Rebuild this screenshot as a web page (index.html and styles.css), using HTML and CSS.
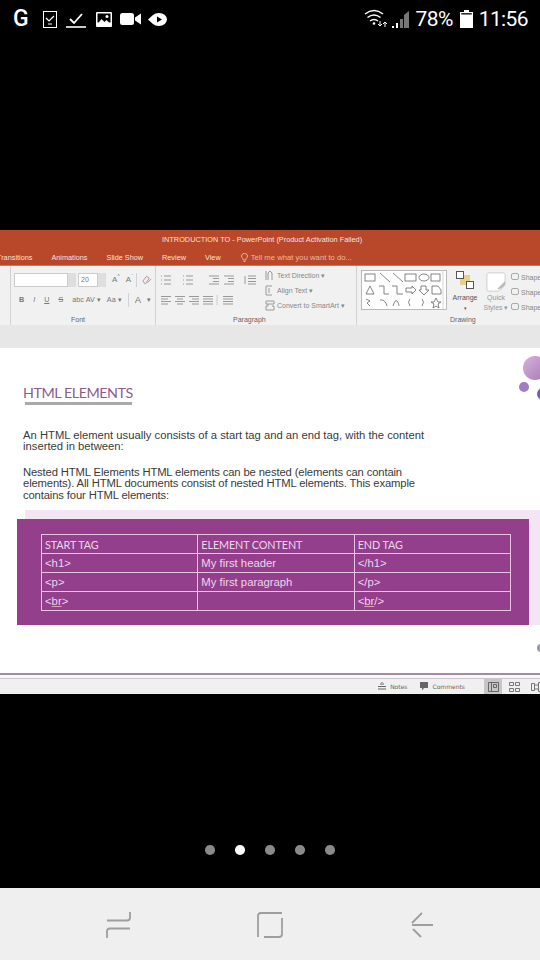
FILE: index.html
```html
<!DOCTYPE html>
<html lang="en">

<head>
    <meta charset="UTF-8">
    <meta name="viewport" content="width=device-width, initial-scale=1.0">
    <title>HTML Elements slide</title>
    <link rel="stylesheet" href="styles.css">
</head>

<body>

    <div class="phone-status">
        <div class="status-left">
            <span class="g-mark">G</span>
            <svg class="ic-check-box" width="14" height="17" viewBox="0 0 14 17"><rect x="0.5" y="0.5" width="13" height="16" fill="none" stroke="#fff"/><path d="M3 7l3 3 5-5M5 13h4" fill="none" stroke="#fff" stroke-width="1.2"/></svg>
            <svg class="ic-check" width="20" height="17" viewBox="0 0 20 17"><path d="M4 8l4 4 8-9" fill="none" stroke="#fff" stroke-width="1.8"/><path d="M0 16h20" stroke="#fff" stroke-width="1.6"/></svg>
            <svg class="ic-pic" width="16" height="15" viewBox="0 0 16 15"><rect width="16" height="15" rx="1" fill="#fff"/><rect x="1.5" y="1.5" width="13" height="9" fill="#000"/><path d="M1.5 12l4-5 3 3 2-2 4 4v1h-13z" fill="#fff"/><circle cx="11" cy="4.5" r="1.5" fill="#fff"/></svg>
            <svg class="ic-video" width="21" height="12" viewBox="0 0 21 12"><rect width="14" height="12" rx="2.5" fill="#fff"/><path d="M15 4.500l6-4v11l-6-4z" fill="#fff"/></svg>
            <svg class="ic-tag" width="19" height="13" viewBox="0 0 19 13"><path d="M0 6.500L5 2q2-2 6-2 7 0 8 6.500-1 6.500-8 6.500-4 0-6-2z" fill="#fff"/><path d="M9 3.500l5 3-5 3z" fill="#000"/></svg>
        </div>
        <div class="status-right">
            <svg class="ic-signal" width="46" height="22" viewBox="0 0 46 22">
                <path d="M1 6q9-7 18 0M3.500 9.500q6.500-5 13 0M6 13q4-3 8 0" fill="none" stroke="#fff" stroke-width="1.500"/>
                <circle cx="10" cy="15.500" r="1.300" fill="#fff"/>
                <path d="M16 13v5M14 16l2 2 2-2M21 19v-5M19 16l2-2 2 2" fill="none" stroke="#fff" stroke-width="1"/>
                <path d="M28 20h2v-2h-2zM32 20h2v-5h-2z" fill="#fff"/>
                <path d="M36 20h3v-9h-3zM40 20h5V3l-5 4z" fill="#777"/>
            </svg>
            <span class="status-pct">78%</span>
            <svg width="13" height="18" viewBox="0 0 13 18"><path d="M4 0h5v2h3.500q.5 0 .5.500V17.500q0 .5-.5.500H.500q-.5 0-.5-.5V2.500Q0 2 .5 2H4z" fill="#fff"/><rect x="1.200" y="3.200" width="10.600" height="1.300" fill="#000"/></svg>
            <span class="status-time">11:56</span>
        </div>
    </div>

    <div class="screen">
        <div class="title-bar">
            <div class="doc-title">INTRODUCTION TO - PowerPoint (Product Activation Failed)</div>
            <div class="tabs">
                <span class="tab first-tab">Transitions</span>
                <span class="tab">Animations</span>
                <span class="tab">Slide Show</span>
                <span class="tab">Review</span>
                <span class="tab">View</span>
                <span class="tell-me">
                    <svg width="7" height="10" viewBox="0 0 7 10"><path d="M2.300 7Q2 5.500 1 4.500 0 3 1 1.500 2 .5 3.500 .5t2.500 1Q7 3 6 4.500 5 5.500 4.700 7zM2.500 8.500h2" fill="none" stroke="#f5cdb8" stroke-width=".8"/></svg>
                    Tell me what you want to do...
                </span>
            </div>
        </div>

        <div class="ribbon">
            <div class="rb-group rb-clip"></div>

            <div class="rb-group rb-font">
                <div class="rb-row">
                    <span class="font-box"></span><span class="spin"></span>
                    <span class="size-box">20</span><span class="spin"></span>
                    <span class="rb-txt grow-a">A<sup>^</sup></span>
                    <span class="rb-txt shrink-a">A<sup>`</sup></span>
                    <span class="rb-sep"></span>
                    <svg width="10" height="10" viewBox="0 0 11 10"><path d="M1 6l4-5 3 2-4 6H3zM6 8l4-4" fill="none" stroke="#a98b9d" stroke-width="1"/></svg>
                </div>
                <div class="rb-row font-row2">
                    <div class="fmt-marks"><b>B</b><i>I</i><u>U</u><s>S</s><span>abc</span></div>
                    <div class="fmt-case"><span>AV ▾</span><span>Aa ▾</span><span class="rb-sep"></span><span class="big-a">A</span><span>▾</span></div>
                </div>
                <div class="rb-label font-label">Font</div>
            </div>

            <div class="rb-group rb-para">
                <div class="para-cols">
                    <div class="para-icons">
                        <div class="rb-row">
                            <svg width="98" height="10" viewBox="0 0 98 10" stroke="#999" fill="none">
                                <path d="M1 1h1M1 5h1M1 9h1M4 1h7M4 5h7M4 9h7M23 1h1M23 5h1M23 9h1M26 1h7M26 5h7M26 9h7M49 1h10M53 3.500h6M53 6.500h6M49 9h10M64 1h10M68 3.500h6M68 6.500h6M64 9h10M88 1h8M88 3.500h8M88 6.500h8M88 9h8M85 1v8"/>
                            </svg>
                        </div>
                        <div class="rb-row">
                            <svg width="80" height="10" viewBox="0 0 80 10" stroke="#999" fill="none">
                                <path d="M1 1.500h10M1 4h7M1 6.500h10M1 9h7M15 1.500h10M17 4h6M15 6.500h10M17 9h6M29 1.500h10M32 4h7M29 6.500h10M32 9h7M43 1.500h10M43 4h10M43 6.500h10M43 9h10"/>
                                <path d="M57 0v10" stroke="#ccc"/>
                                <path d="M63 1.500h10M63 4h10M63 6.500h10M63 9h10"/>
                            </svg>
                        </div>
                    </div>
                    <div class="para-text">
                        <span><svg width="10" height="11" viewBox="0 0 10 11"><path d="M1 1v9M3 10V3l2-2 2 2v7" fill="none" stroke="#999"/></svg>Text Direction ▾</span>
                        <span><svg width="10" height="11" viewBox="0 0 10 11"><path d="M7 1H1v9h6M4 3v5" fill="none" stroke="#999"/></svg>Align Text ▾</span>
                        <span><svg width="10" height="11" viewBox="0 0 10 11"><path d="M1 1h8v3H1zM3 4v2h-2v4h8V6H7" fill="none" stroke="#999"/></svg>Convert to SmartArt ▾</span>
                    </div>
                </div>
                <div class="rb-label para-label">Paragraph</div>
            </div>

            <div class="rb-group rb-draw">
                <div class="draw-cols">
                    <svg class="gallery" width="86" height="40" viewBox="0 0 86 40" fill="none" stroke="#666" stroke-width=".8">
                        <rect x=".5" y=".5" width="85" height="39" fill="#fff" stroke="#aaa"/>
                        <rect x="4" y="4" width="10" height="7"/>
                        <path d="M19 3l10 9M32 3l10 9"/>
                        <rect x="44" y="4" width="11" height="7"/>
                        <ellipse cx="63" cy="7.500" rx="5" ry="3.500"/>
                        <rect x="70" y="4" width="9" height="7"/>
                        <path d="M5 24l4-8 4 8zM18 16h5v8h5M31 16h5v8h6M45 18h6v-2l4 4-4 4v-2h-6zM60 16h5v4h3l-5 5-5-5h2zM71 16h6l3 4v4h-9z"/>
                        <path d="M5 29l4 2-3 2 3 3M19 30q5-1 7 6M32 36q2-7 4-5t2 5M49 29q-3 3 0 7M61 29q3 3 0 7"/>
                        <path d="M75 28l2 4h3l-3 2 1 4-3-2-3 2 1-4-3-2h3z"/>
                        <path d="M82 .5v39" stroke="#ccc"/>
                    </svg>
                    <div class="arrange">
                        <svg width="18" height="18" viewBox="0 0 18 18"><rect x="4" y="4" width="10" height="10" fill="#e8cf8c"/><rect x=".5" y=".5" width="7" height="7" fill="#fff" stroke="#555"/><rect x="10.500" y="10.500" width="7" height="7" fill="#fff" stroke="#555"/></svg>
                        <span>Arrange</span>
                        <span class="caret">▾</span>
                    </div>
                    <div class="quick">
                        <svg width="20" height="20" viewBox="0 0 22 22"><path d="M3 1h16q2 0 2 2v11q-4 6-8 7H3q-2 0-2-2V3q0-2 2-2z" fill="#fff" stroke="#ccc"/><path d="M12 19l9-9v4q-4 5-9 5z" fill="#bbb"/></svg>
                        <span>Quick</span>
                        <span>Styles ▾</span>
                    </div>
                    <div class="shapes">
                        <span><i class="sw"></i>Shape Fill</span>
                        <span><i class="sw"></i>Shape Outline</span>
                        <span><i class="sw"></i>Shape Effects</span>
                    </div>
                </div>
                <div class="rb-label draw-label">Drawing</div>
            </div>
        </div>

        <div class="ribbon-gap"></div>

        <div class="slide">
            <i class="dot dot-big"></i>
            <i class="dot dot-small"></i>
            <i class="dot dot-dark"></i>
            <i class="dot dot-edge"></i>

            <h1>HTML ELEMENTS</h1>
            <p>An HTML element usually consists of a start tag and an end tag, with the content<br>inserted in between:</p>
            <p>Nested HTML Elements HTML elements can be nested (elements can contain<br>elements). All HTML documents consist of nested HTML elements. This example<br>contains four HTML elements:</p>

            <div class="table-back">
                <div class="table-card">
                    <table>
                        <tr class="head-row"><td>START TAG</td><td>ELEMENT CONTENT</td><td>END TAG</td></tr>
                        <tr><td>&lt;h1&gt;</td><td>My first header</td><td>&lt;/h1&gt;</td></tr>
                        <tr><td>&lt;p&gt;</td><td>My first paragraph</td><td>&lt;/p&gt;</td></tr>
                        <tr><td>&lt;<span class="squiggle">br</span>&gt;</td><td></td><td>&lt;<span class="squiggle">br</span>/&gt;</td></tr>
                    </table>
                </div>
            </div>
        </div>

        <div class="window-status">
            <span class="ws-item">
                <svg width="10" height="9" viewBox="0 0 10 9"><path d="M3 2h4M1 4.500h8M1 7h8M5 0v1" stroke="#666" fill="none"/></svg>
                Notes
            </span>
            <span class="ws-item last-item">
                <svg width="9" height="9" viewBox="0 0 9 9"><path d="M0 0h8v6H4L2 8.500V6H0z" fill="#666"/></svg>
                Comments
            </span>
            <span class="view-btn active">
                <svg width="11" height="10" viewBox="0 0 11 10"><path d="M.5.500h10v9H.5zM3.500.5v9M5.500 2.500h3v3h-3z" fill="none" stroke="#666"/></svg>
            </span>
            <span class="view-btn">
                <svg width="11" height="10" viewBox="0 0 11 10"><path d="M.5.500h4v3h-4zM6.500.5h4v3h-4zM.5 6.500h4v3h-4zM6.500 6.500h4v3h-4z" fill="none" stroke="#777"/></svg>
            </span>
            <span class="view-btn">
                <svg width="10" height="10" viewBox="0 0 10 10"><path d="M.5 1.500h3v7h-3zM3.500 3h4v4h-4zM7.500 .5h2v9h-2z" fill="none" stroke="#777"/></svg>
            </span>
        </div>
    </div>

    <div class="pager">
        <i class="pager-dot"></i>
        <i class="pager-dot on"></i>
        <i class="pager-dot"></i>
        <i class="pager-dot"></i>
        <i class="pager-dot"></i>
    </div>

    <div class="nav-bar">
        <svg width="540" height="72" viewBox="0 0 540 72" fill="none" stroke="#9e9e9e" stroke-width="1.800">
            <path d="M107 32.500h20q3 0 3-3V24M130 40.500h-20q-3 0-3 3V50"/>
            <path d="M258 49V28q0-3 3-3h21M282 30v16q0 3-3 3h-15"/>
            <path d="M433 37h-21M412 35l10-10M413 41l8 8"/>
        </svg>
    </div>

</body>

</html>
```

FILE: styles.css
```css
body {
    margin: 0;
    width: 540px;
    height: 960px;
    overflow: hidden;
    display: flex;
    flex-direction: column;
    background-color: #000;
    font-family: "Liberation Sans", Arial, sans-serif;
}

/* phone status bar */
.phone-status {
    height: 40px;
    flex: none;
    display: flex;
    justify-content: space-between;
    align-items: center;
    padding: 0 12px 2px 13px;
    box-sizing: border-box;
    color: #fff;
    margin-bottom: 190px;
}

.status-left,
.status-right {
    display: flex;
    align-items: center;
}

.g-mark {
    font-family: Roboto, sans-serif;
    font-weight: 500;
    font-size: 23px;
    line-height: 24px;
    width: 18px;
}

.ic-check-box { margin-left: 12px; }
.ic-check { margin-left: 9px; }
.ic-pic { margin-left: 10px; }
.ic-video { margin-left: 8px; }
.ic-tag { margin-left: 7px; }

.status-pct,
.status-time {
    font-family: Roboto, sans-serif;
    font-size: 21px;
    line-height: 24px;
}

.ic-signal {
    margin-right: 6px;
}

.status-pct {
    margin-right: 7px;
    letter-spacing: -.6px;
}

.status-time {
    margin-left: 6px;
    letter-spacing: -.6px;
}

/* powerpoint window */
.screen {
    flex: none;
    height: 464px;
    display: flex;
    flex-direction: column;
    overflow: hidden;
    background-color: #f8f8f8;
}

.title-bar {
    height: 36px;
    flex: none;
    background-color: #b9472a;
    color: #f6e1d8;
    border-bottom: 1px solid #d9704f;
    box-sizing: border-box;
}

.doc-title {
    font-size: 7.350px;
    line-height: 10px;
    padding: 5px 0 0 162px;
}

.tabs {
    display: flex;
    align-items: center;
    gap: 19px;
    padding-top: 8px;
    font-size: 7.300px;
    line-height: 10px;
    white-space: nowrap;
}

.first-tab {
    margin-left: -3px;
}

.tell-me {
    display: flex;
    align-items: center;
    gap: 3px;
    margin-left: 1px;
    font-size: 7.700px;
    color: #eeb7a0;
}

.ribbon {
    height: 59px;
    flex: none;
    display: flex;
    background-color: #f1f1f1;
    color: #777;
    font-size: 7px;
    overflow: hidden;
}

.rb-group {
    position: relative;
    box-sizing: border-box;
    height: 100%;
    flex: none;
    border-right: 1px solid #d2d2d2;
    padding-top: 6px;
}

.rb-clip {
    width: 11px;
}

.rb-font {
    width: 145px;
    padding-left: 3px;
}

.rb-para {
    width: 201px;
    padding-left: 4px;
}

.rb-draw {
    flex: 1;
    border-right: none;
    padding-left: 4px;
    padding-top: 4px;
}

.rb-row {
    display: flex;
    align-items: center;
    height: 15px;
}

.rb-label {
    position: absolute;
    left: 0;
    right: 0;
    bottom: 1px;
    text-align: center;
    font-size: 7px;
    line-height: 9px;
    color: #666;
}

.font-label {
    right: 10px;
}

.para-label {
    left: 77px;
    right: auto;
}

.draw-label {
    left: 93px;
    right: auto;
}

.font-box {
    width: 54px;
    height: 14px;
    background-color: #fff;
    border: 1px solid #ccc;
    box-sizing: border-box;
}

.spin {
    width: 8px;
    height: 14px;
    background-color: #dedede;
}

.size-box {
    width: 20px;
    height: 14px;
    margin-left: 2px;
    padding-left: 2px;
    background-color: #fff;
    border: 1px solid #ccc;
    box-sizing: border-box;
    line-height: 12px;
}

.rb-txt {
    font-size: 8px;
    color: #777;
}

.rb-txt sup {
    font-size: 5px;
    line-height: 0;
}

.grow-a {
    margin-left: 6px;
}

.shrink-a {
    margin-left: 6px;
}

.rb-sep {
    width: 1px;
    height: 14px;
    margin: 0 5px 0 3px;
    background-color: #d2d2d2;
}

.font-row2 {
    margin-top: 5px;
    padding-left: 5px;
    font-size: 7.200px;
    white-space: nowrap;
}

.fmt-marks,
.fmt-case {
    display: flex;
    align-items: center;
}

.fmt-marks {
    gap: 9px;
}

.fmt-case {
    gap: 6px;
    margin-left: 2px;
}

.fmt-case .rb-sep {
    margin: 0;
}

.big-a {
    font-size: 9.500px;
}

.para-cols {
    display: flex;
}

.para-icons {
    width: 105px;
}

.para-icons .rb-row:last-child {
    margin-top: 5px;
}

.para-text {
    display: flex;
    flex-direction: column;
    margin-top: -4px;
    line-height: 15px;
    white-space: nowrap;
    color: #888;
}

.para-text span {
    display: flex;
    align-items: center;
    gap: 2px;
}

.draw-cols {
    display: flex;
    align-items: flex-start;
}

.arrange,
.quick {
    display: flex;
    flex-direction: column;
    align-items: center;
    line-height: 10px;
    white-space: nowrap;
}

.arrange {
    width: 30px;
    margin-left: 3px;
    color: #555;
}

.arrange svg {
    margin: 1px 0 4px;
}

.caret {
    font-size: 5px;
}

.quick {
    width: 26px;
    margin-left: 3px;
    color: #999;
}

.quick svg {
    margin: 2px 0 1px;
}

.shapes {
    display: flex;
    flex-direction: column;
    line-height: 15px;
    white-space: nowrap;
    margin-left: 2px;
    color: #888;
}

.sw {
    display: inline-block;
    width: 8px;
    height: 7px;
    margin-right: 2px;
    border: 1px solid #aaa;
    border-radius: 2px;
    box-sizing: border-box;
}

.ribbon-gap {
    height: 23px;
    flex: none;
    background-color: #e7e7e7;
}

/* the slide */
.slide {
    position: relative;
    flex: 1;
    background-color: #fff;
    padding-top: 36px;
    border-bottom: 2px solid #a888a8;
    overflow: hidden;
    color: #3a3a3a;
}

.slide h1 {
    width: 107px;
    margin: 0 0 25px 25px;
    padding-bottom: 1px;
    border-bottom: 3px solid #aaa;
    font-family: Lato, sans-serif;
    font-size: 14.300px;
    font-weight: 400;
    letter-spacing: -.45px;
    line-height: 17px;
    text-indent: -2px;
    color: #8c5b90;
    white-space: nowrap;
}

.slide p {
    margin: 0 0 14px 23px;
    font-size: 11.250px;
    line-height: 11.400px;
    white-space: nowrap;
}

.slide p + p {
    margin-bottom: 9px;
    letter-spacing: -.13px;
}

.table-back {
    margin: 0 0 0 25px;
    padding-top: 9px;
    background-color: #f3e6f2;
}

.table-card {
    margin: 0 11px 0 -8px;
    padding: 15px 18px 14px 24px;
    background-color: #933f8c;
}

.slide table {
    width: 470px;
    border-collapse: collapse;
    table-layout: fixed;
    color: #efd5ec;
    font-size: 11.300px;
}

.slide td {
    height: 19px;
    padding: 0 0 0 3px;
    border: 1px solid #e6c4e2;
    box-sizing: border-box;
    line-height: 17px;
}

.head-row td {
    font-family: Lato, sans-serif;
    font-size: 10.800px;
    letter-spacing: -.1px;
}

.squiggle {
    text-decoration: underline #e0a0b0 1px;
}

.dot {
    position: absolute;
    border-radius: 50%;
}

.dot-big {
    left: 523px;
    top: 8px;
    width: 24px;
    height: 24px;
    background: linear-gradient(135deg, #d9b3d9, #a878b8);
}

.dot-small {
    left: 519px;
    top: 34px;
    width: 10px;
    height: 10px;
    background-color: #a67cc0;
}

.dot-dark {
    left: 537px;
    top: 40px;
    width: 12px;
    height: 12px;
    background-color: #7a5aa8;
}

.dot-edge {
    left: 537px;
    top: 296px;
    width: 8px;
    height: 8px;
    background-color: #9a9aa8;
}

.window-status {
    height: 16px;
    flex: none;
    display: flex;
    align-items: center;
    justify-content: flex-end;
    margin-top: 3px;
    background-color: #f0f0f0;
    border-top: 1px solid #c8c8c8;
    box-sizing: border-box;
    color: #666;
    font-family: "DejaVu Sans", sans-serif;
    font-size: 6px;
    white-space: nowrap;
    overflow: hidden;
}

.ws-item {
    display: flex;
    align-items: center;
    gap: 3px;
    margin-right: 13px;
}

.last-item {
    margin-right: 19px;
}

.view-btn {
    display: flex;
    align-items: center;
    justify-content: center;
    flex: none;
    width: 18px;
    height: 15px;
    margin-right: 3px;
}

.view-btn.active {
    background-color: #c6c6c6;
}

.view-btn:last-child {
    margin-left: 1px;
    margin-right: -5px;
}

/* pager and android nav */
.pager {
    flex: none;
    height: 194px;
    display: flex;
    align-items: flex-start;
    justify-content: center;
    gap: 20.500px;
    padding-top: 151px;
    box-sizing: border-box;
}

.pager-dot {
    width: 9.500px;
    height: 9.500px;
    border-radius: 50%;
    background-color: #8a8a8a;
}

.pager-dot.on {
    background-color: #fff;
}

.nav-bar {
    flex: none;
    height: 72px;
    background-color: #efefef;
}

.nav-bar svg {
    display: block;
}
```
